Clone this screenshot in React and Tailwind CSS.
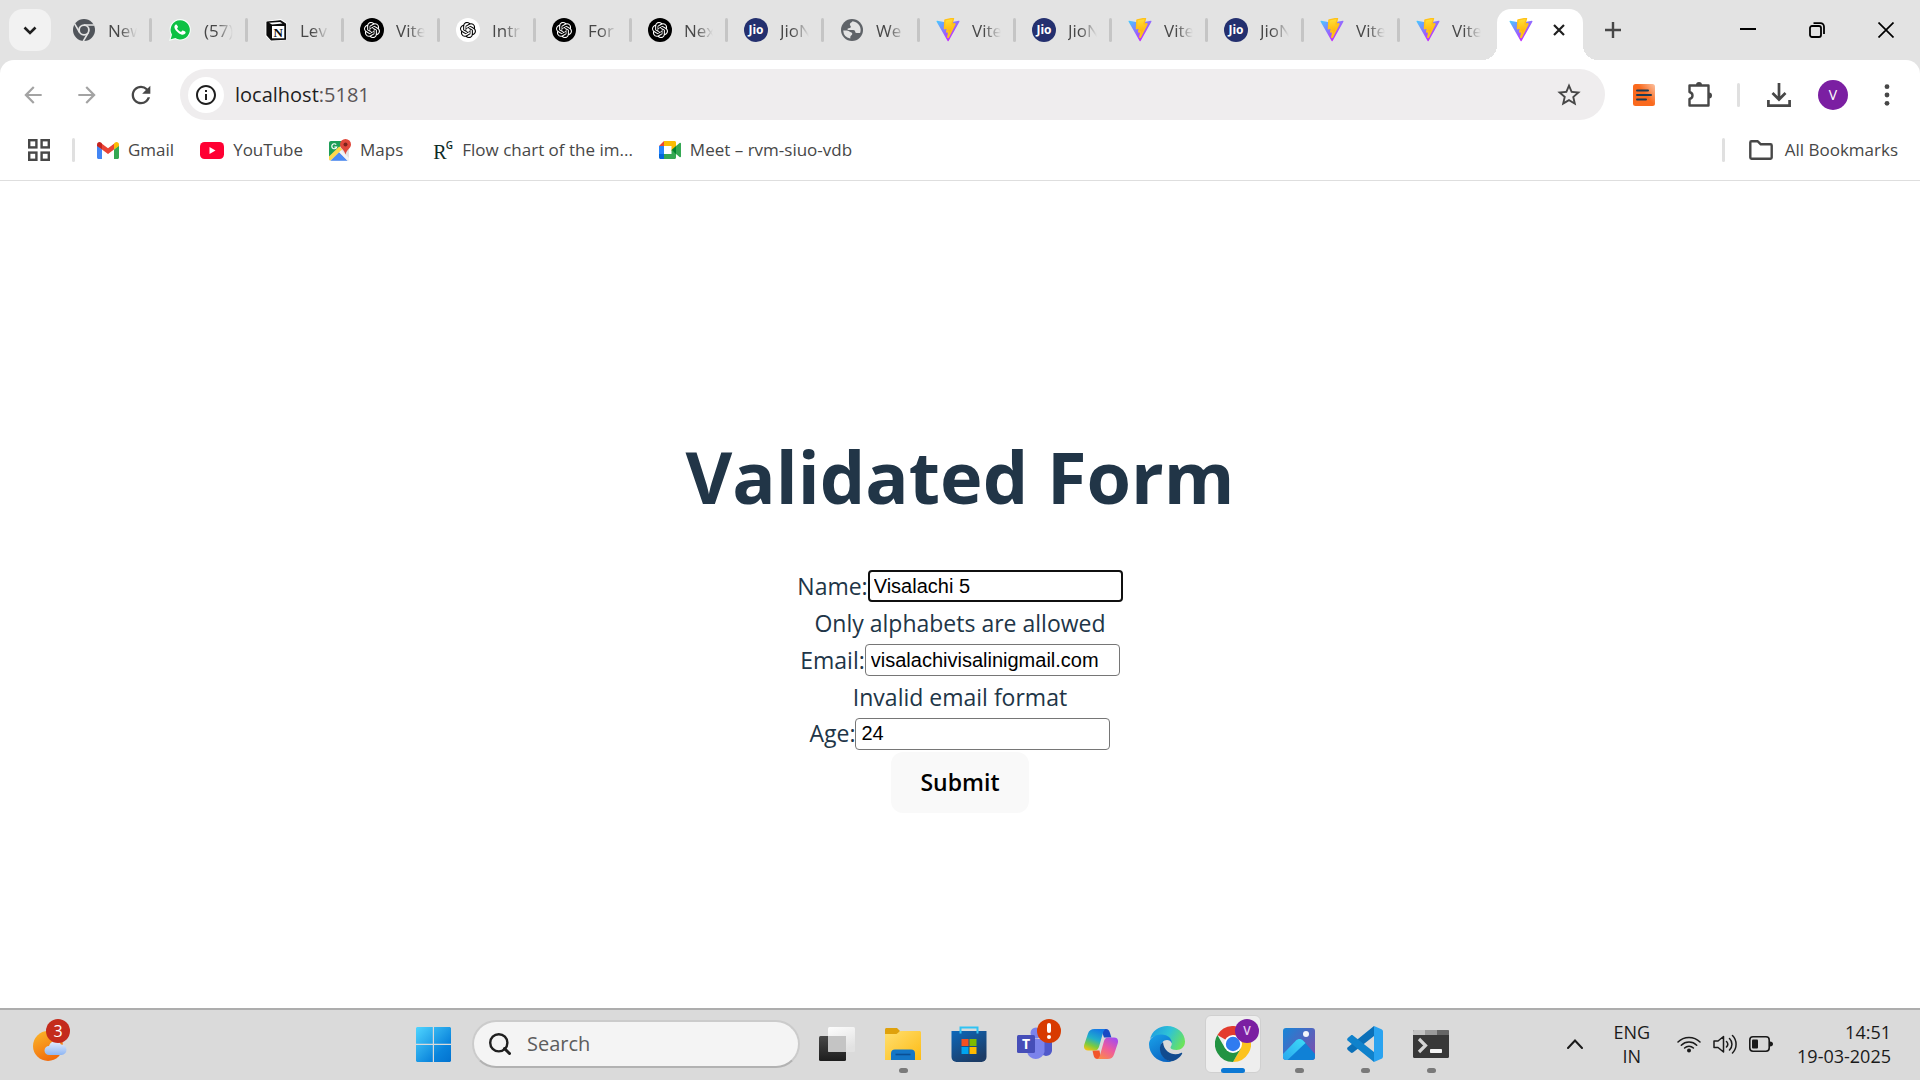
import React, { useState } from "react";
import { SiOpenai } from "react-icons/si";
import {
  MdArrowBack,
  MdArrowForward,
  MdRefresh,
  MdStarOutline,
  MdInfoOutline,
} from "react-icons/md";

function ViteIcon() {
  return (
    <svg viewBox="0 0 410 404" className="size-6 shrink-0" aria-hidden="true">
      <defs>
        <linearGradient id="viteShell" x1="6" y1="33" x2="235" y2="344" gradientUnits="userSpaceOnUse">
          <stop stopColor="#41D1FF" />
          <stop offset="1" stopColor="#BD34FE" />
        </linearGradient>
        <linearGradient id="viteBolt" x1="194.65" y1="8.82" x2="236.08" y2="292.99" gradientUnits="userSpaceOnUse">
          <stop stopColor="#FFEA83" />
          <stop offset=".083" stopColor="#FFDD35" />
          <stop offset="1" stopColor="#FFA800" />
        </linearGradient>
      </defs>
      <path
        fill="url(#viteShell)"
        d="M399.641 59.5246L215.643 388.545C211.844 395.338 202.084 395.378 198.228 388.618L10.5817 59.5563C6.38087 52.1896 12.6802 43.2665 21.0281 44.7586L205.223 77.6824C206.398 77.8924 207.601 77.8904 208.776 77.6763L389.119 44.8058C397.439 43.2894 403.768 52.1434 399.641 59.5246Z"
      />
      <path
        fill="url(#viteBolt)"
        stroke="#ffc21a"
        strokeWidth="24"
        d="M292.965 1.5744L156.801 28.2552C154.563 28.6937 152.906 30.5903 152.771 32.8664L144.395 174.33C144.198 177.662 147.258 180.248 150.51 179.498L188.42 170.749C191.967 169.931 195.172 173.055 194.443 176.622L183.18 231.775C182.422 235.487 185.907 238.661 189.532 237.56L212.947 230.446C216.577 229.344 220.065 232.527 219.297 236.242L201.398 322.875C200.278 328.294 207.486 331.249 210.492 326.603L212.5 323.5L323.454 102.072C325.312 98.3645 322.108 94.137 318.036 94.9228L279.014 102.454C275.347 103.161 272.227 99.746 273.262 96.1583L298.731 7.86689C299.767 4.27314 296.636 0.855181 292.965 1.5744Z"
      />
    </svg>
  );
}

function OpenAiDark() {
  return (
    <span className="flex size-6 shrink-0 items-center justify-center rounded-full bg-black">
      <SiOpenai className="size-4 text-white" />
    </span>
  );
}

function OpenAiLight() {
  return (
    <span className="flex size-6 shrink-0 items-center justify-center rounded-full bg-white">
      <SiOpenai className="size-4 text-black" />
    </span>
  );
}

function JioIcon() {
  return (
    <span className="flex size-6 shrink-0 items-center justify-center rounded-full bg-[#24306f] text-xs leading-none font-bold text-white">
      Jio
    </span>
  );
}

function WhatsAppIcon() {
  return (
    <svg viewBox="0 0 24 24" className="size-6 shrink-0" aria-hidden="true">
      <path fill="#f5fff8" d="M12.2 1a10.6 10.6 0 0 0-9.300 15.800L1 23l6.400-1.700A10.700 10.700 0 1 0 12.200 1z" />
      <path fill="#0dc143" d="M12.2 2.200a9.600 9.600 0 0 0-8.200 14.500L2.700 21.300l4.700-1.200A9.600 9.600 0 1 0 12.200 2.200z" />
      <path
        fill="#fff"
        d="M8.700 6.800c-.3-.6-.9-.5-1.300-.1-.5.5-1.100 1.200-1 2.500.1 1.300 1 2.700 2.500 4.300 1.800 1.900 3.500 2.900 5 3.200 1.500.3 2.700-.3 3.300-1.100.4-.6.5-1.400.3-1.700-.2-.3-2.200-1.300-2.700-1.400-.4-.1-.6.2-1.300 1.100-.3.4-.6.300-1 .1-1.200-.5-2.600-1.700-3.300-3-.2-.4 0-.6.3-.900.6-.7.6-.900.4-1.400z"
      />
    </svg>
  );
}

function NotionIcon() {
  return (
    <svg viewBox="0 0 24 24" className="size-6 shrink-0" aria-hidden="true">
      <path
        d="M3 4.500 16.500 2.500 21.500 6v14.500L8 22 3 17.500z"
        fill="#fff"
        stroke="#fff"
        strokeWidth="3"
        strokeLinejoin="round"
      />
      <path d="M3 4 16.500 2.800 21.500 6v15.200L7.500 22 3 17z" fill="#0b0b0b" stroke="#0b0b0b" strokeWidth="1.200" strokeLinejoin="round" />
      <path d="M5 4.800 16 4l2.500 1.600-10.500.8z" fill="#fff" />
      <path d="M8 8h12.300v12.300H8z" fill="#fff" />
      <text x="14.200" y="18.800" textAnchor="middle" fontSize="13" fontWeight="700" fontFamily="Liberation Serif, serif" fill="#0b0b0b">
        N
      </text>
    </svg>
  );
}

function ChromeGreyIcon() {
  return (
    <svg viewBox="0 0 24 24" className="size-6 shrink-0" aria-hidden="true">
      <circle cx="12" cy="12" r="11" fill="#50545a" />
      <path d="M12 7h10M16.300 14.500 11.300 23.200M7.700 14.500 2.700 5.800" stroke="#e3e3e3" strokeWidth="1.600" />
      <circle cx="12" cy="12" r="5.800" fill="#e3e3e3" />
      <circle cx="12" cy="12" r="4" fill="#50545a" />
    </svg>
  );
}

function GlobeIcon() {
  return (
    <svg viewBox="0 0 24 24" className="size-6 shrink-0" aria-hidden="true">
      <circle cx="12" cy="12" r="11" fill="#5f6368" />
      <path
        d="M12.500 3.200c-.6 1.300-2 1.300-2.500 2.600-.5 1.500 1 2 .8 3.200-.2 1.300-1.800 1-2.800 1.400-.9.400-.6 1.600.3 1.600h5c1.200 0 1.800.8 1.900 1.800.1 1.300 1.300 1.200 2.500 1.200h2.400A8.800 8.800 0 0 0 12.500 3.200z"
        fill="#e3e3e3"
      />
      <path d="M3.200 12.500h3.600c1.600 0 2.200 1 3.500 1.500 1.500.5 2.200 1 1.900 2.300-.3 1.200-1.900 1.400-1.900 2.700v1.600a8.800 8.800 0 0 1-7.100-8.100z" fill="#e3e3e3" />
    </svg>
  );
}

const iconFor = {
  chrome: ChromeGreyIcon,
  whatsapp: WhatsAppIcon,
  notion: NotionIcon,
  openai: OpenAiDark,
  openaiLight: OpenAiLight,
  jio: JioIcon,
  globe: GlobeIcon,
  vite: ViteIcon,
};

const tabs = [
  ["chrome", "New"],
  ["whatsapp", "(57)"],
  ["notion", "Lev"],
  ["openai", "Vite"],
  ["openaiLight", "Intr"],
  ["openai", "For"],
  ["openai", "Nex"],
  ["jio", "JioN"],
  ["globe", "We"],
  ["vite", "Vite"],
  ["jio", "JioN"],
  ["vite", "Vite"],
  ["jio", "JioN"],
  ["vite", "Vite"],
  ["vite", "Vite"],
];

function TabStrip() {
  return (
    <div className="flex h-[60px] items-stretch bg-[#e3e3e3]">
      <button
        aria-label="Search tabs"
        className="my-[9px] mr-[5px] ml-[9px] flex w-[42px] shrink-0 items-center justify-center rounded-[14px] bg-[#f2f2f2]"
      >
        <svg viewBox="0 0 14 9" className="h-[9px] w-[14px]" fill="none" stroke="#1f1f1f" strokeWidth="2.600" aria-hidden="true">
          <path d="M1.500 1.500 7 7l5.500-5.500" />
        </svg>
      </button>
      <div role="tablist" className="flex min-w-0">
        {tabs.map(([icon, title], i) => {
          const Icon = iconFor[icon];
          return (
            <button
              key={i}
              role="tab"
              aria-selected="false"
              className="flex w-24 min-w-0 items-center pl-4 text-left"
            >
              <Icon />
              <span className="ml-3 pt-0.5 text-[17px] leading-6 whitespace-nowrap text-[#474747] [mask-image:linear-gradient(to_right,black_12px,transparent_29px)]">
                {title}
              </span>
              {i < tabs.length - 1 && <span className="ml-auto h-6 w-[3px] shrink-0 rounded-full bg-[#c5c5c5]" />}
            </button>
          );
        })}
        <div className="relative mt-[9px] ml-px flex w-[86px] shrink-0 items-center rounded-t-[14px] bg-white pb-[9px] pl-3">
          <span className="absolute bottom-0 -left-[15px] size-[15px] bg-[radial-gradient(circle_at_0_0,transparent_15px,white_15px)]" />
          <span className="absolute -right-[15px] bottom-0 size-[15px] bg-[radial-gradient(circle_at_100%_0,transparent_15px,white_15px)]" />
          <button role="tab" aria-selected="true" aria-label="Vite + React">
            <ViteIcon />
          </button>
          <button aria-label="Close tab" className="ml-5">
            <svg viewBox="0 0 12 12" className="size-3" stroke="#1f1f1f" strokeWidth="2.200" aria-hidden="true">
              <path d="m1 1 10 10M11 1 1 11" />
            </svg>
          </button>
        </div>
      </div>
      <button aria-label="New tab" className="ml-[22px] flex w-4 items-center">
        <svg viewBox="0 0 16 16" className="size-4" stroke="#474747" strokeWidth="2.400" aria-hidden="true">
          <path d="M8 0v16M0 8h16" />
        </svg>
      </button>
      <div className="ml-auto flex">
        <button aria-label="Minimize" className="flex w-[69px] items-center justify-center">
          <svg viewBox="0 0 16 16" className="size-4" stroke="#000" strokeWidth="2" aria-hidden="true">
            <path d="M0 7h16" />
          </svg>
        </button>
        <button aria-label="Restore" className="flex w-[69px] items-center justify-center">
          <svg viewBox="0 0 16 16" className="size-4" fill="none" stroke="#000" strokeWidth="1.800" aria-hidden="true">
            <rect x="1" y="4" width="11" height="11" rx="2" />
            <path d="M4.500 1.200h7a3.500 3.500 0 0 1 3.500 3.500V12" />
          </svg>
        </button>
        <button aria-label="Close window" className="flex w-[69px] items-center justify-center">
          <svg viewBox="0 0 16 16" className="size-4" stroke="#000" strokeWidth="1.700" aria-hidden="true">
            <path d="m.5.500 15 15M15.500.500l-15 15" />
          </svg>
        </button>
      </div>
    </div>
  );
}

function ToolButton({ label, children }) {
  return (
    <button aria-label={label} className="flex h-[50px] w-[54px] shrink-0 items-center justify-center text-[#474747]">
      {children}
    </button>
  );
}

function Toolbar() {
  return (
    <div className="flex items-center rounded-t-[14px] bg-white px-[6px] pt-[9px]">
      <ToolButton label="Back">
        <MdArrowBack className="size-[26px] text-[#a3a3a3]" />
      </ToolButton>
      <ToolButton label="Forward">
        <MdArrowForward className="size-[26px] text-[#a3a3a3]" />
      </ToolButton>
      <ToolButton label="Reload">
        <MdRefresh className="size-7" />
      </ToolButton>
      <div className="ml-3 flex h-[51px] min-w-0 flex-1 items-center rounded-full bg-[#efedee] pr-[22px] pl-2">
        <button
          aria-label="View site information"
          className="flex size-9 shrink-0 items-center justify-center rounded-full bg-white text-[#1f1f1f]"
        >
          <MdInfoOutline className="size-6" />
        </button>
        <p className="ml-[11px] text-xl leading-7 text-[#5b5557]">
          <span className="text-[#1f1f1f]">localhost</span>:5181
        </p>
        <button aria-label="Bookmark this tab" className="ml-auto text-[#474747]">
          <MdStarOutline className="size-7" />
        </button>
      </div>
      <div className="ml-3 flex items-center">
        <ToolButton label="Extension">
          <svg viewBox="0 0 22 22" className="size-[22px]" aria-hidden="true">
            <defs>
              <linearGradient id="noteFill" x1="1" y1="0" x2=".5" y2=".4">
                <stop stopColor="#fbc3a3" />
                <stop offset="1" stopColor="#fa6a1e" />
              </linearGradient>
            </defs>
            <rect width="22" height="22" rx="2.500" fill="url(#noteFill)" />
            <path d="M4 6.500h11M4 11h14M4 15.500h9" stroke="#1d3b53" strokeWidth="2" strokeLinecap="round" />
          </svg>
        </ToolButton>
        <ToolButton label="Extensions">
          <svg viewBox="0 0 26 26" className="mb-0.5 ml-1 size-[26px]" fill="none" stroke="#474747" strokeWidth="2.400" strokeLinejoin="round" aria-hidden="true">
            <path d="M2.500 4.500h19v20h-19v-6.500c2.200-.6 3-1.800 3-3.500s-.8-2.900-3-3.500z" />
            <path d="M9 4a3 3 0 0 1 6 0zM22 11.500a3 3 0 0 1 0 6z" fill="#474747" stroke="none" />
          </svg>
        </ToolButton>
        <span className="mx-3 h-6 w-[3px] shrink-0 rounded-full bg-[#e0e0e0]" />
        <ToolButton label="Downloads">
          <svg viewBox="0 0 24 24" className="size-6" fill="none" stroke="#474747" strokeWidth="2.700" aria-hidden="true">
            <path d="M12 0v16M5.500 10 12 16.500 18.500 10M1.400 17v5.600h21.200V17" />
          </svg>
        </ToolButton>
        <ToolButton label="Profile">
          <span className="flex size-[30px] items-center justify-center rounded-full bg-[#7b1fa2] text-sm text-white">V</span>
        </ToolButton>
        <ToolButton label="Menu">
          <svg viewBox="0 0 6 22" className="h-[22px] w-[6px]" fill="#474747" aria-hidden="true">
            <circle cx="3" cy="2.700" r="2.400" />
            <circle cx="3" cy="11" r="2.400" />
            <circle cx="3" cy="19.300" r="2.400" />
          </svg>
        </ToolButton>
      </div>
    </div>
  );
}

function GmailIcon() {
  return (
    <svg viewBox="0 0 22 17" className="h-[17px] w-[22px]" aria-hidden="true">
      <path fill="#4285f4" d="M0 3v12.500C0 16.300.7 17 1.500 17H5V7.500z" />
      <path fill="#34a853" d="M22 3v12.500c0 .8-.7 1.500-1.500 1.500H17V7.500z" />
      <path fill="#ea4335" d="m5 1.800 6 4.500 6-4.500v5.800L11 12 5 7.600z" />
      <path fill="#c5221f" d="M0 2.600C0 .5 2.300-.7 4 .6l1 .8v6.200L0 3.900z" />
      <path fill="#fbbc04" d="M22 2.600c0-2.100-2.300-3.300-4-2l-1 .8v6.200l5-3.700z" />
    </svg>
  );
}

function YouTubeIcon() {
  return (
    <svg viewBox="0 0 24 17" className="h-[17px] w-6" aria-hidden="true">
      <rect width="24" height="17" rx="4.500" fill="#ff0033" />
      <path d="M9.500 5v7l6-3.500z" fill="#fff" />
    </svg>
  );
}

function MapsIcon() {
  return (
    <svg viewBox="0 0 22 22" className="size-[22px]" aria-hidden="true">
      <rect y="2" width="20" height="20" rx="2" fill="#e4e4e4" />
      <path d="M0 14V4c0-1.100.9-2 2-2h12v3L0 18z" fill="#1e9e58" />
      <path d="m0 17.500 10.200-10 3 3L1.500 21.500C.6 21.300 0 20.800 0 20z" fill="#ffd94a" />
      <path d="m1.500 21.800 8.700-8.600 8.600 8.600z" fill="#4a8af4" />
      <path d="m10.200 13.200 2-2L20 19v1c0 1-.6 1.800-1.500 1.800z" fill="#f4f4f4" />
      <path d="M16.500 0A5.500 5.500 0 0 1 22 5.500c0 4-4.200 4.800-5.500 10-1.300-5.200-5.500-6-5.500-10A5.500 5.500 0 0 1 16.500 0z" fill="#e0483b" />
      <circle cx="16.500" cy="5.500" r="2" fill="#7d231c" />
      <path d="M7.200 5.600A2.500 2.500 0 1 0 7.700 8H5.300" fill="none" stroke="#fff" strokeWidth="1.200" />
    </svg>
  );
}

function ResearchGateIcon() {
  return (
    <span className="flex h-5 w-6 items-end pl-1 text-[#0d2b26]">
      <span className="font-['Liberation_Serif',serif] text-xl leading-4">R</span>
      <span className="-ml-px self-start text-[10px] leading-[10px] font-semibold">G</span>
    </span>
  );
}

function MeetIcon() {
  return (
    <svg viewBox="0 0 22 18" className="h-[18px] w-[22px]" aria-hidden="true">
      <path fill="#ea4335" d="M5 0v5H0z" />
      <path fill="#fbbc04" d="M5 0h10.500c.9 0 1.500.6 1.500 1.500V7l-4.500 3V5H5z" />
      <path fill="#2684fc" d="M0 5h5v8H0z" />
      <path fill="#0066da" d="M0 13h5v5H1.500C.7 18 0 17.300 0 16.500z" />
      <path fill="#34a853" d="M5 13h7.500V9L17 12v4.500c0 .9-.6 1.500-1.500 1.500H5z" />
      <path fill="#00832d" d="m12.500 9 4.500-4v8z" />
      <path fill="#34a853" d="m17 5 3.600-3c.6-.5 1.400-.1 1.400.6v12.800c0 .7-.8 1.100-1.400.6L17 13z" />
    </svg>
  );
}

function Bookmark({ icon, children }) {
  return (
    <a href="#" className="flex shrink-0 items-center gap-[9px]">
      {icon}
      {children}
    </a>
  );
}

function BookmarksBar() {
  return (
    <nav
      aria-label="Bookmarks"
      className="flex h-[61px] items-center border-b border-[#dedede] bg-white pr-[22px] pl-7 text-[17px] leading-6 text-[#474747]"
    >
      <button aria-label="Apps" className="shrink-0">
        <svg viewBox="0 0 22 22" className="size-[22px]" fill="none" stroke="#474747" strokeWidth="2.400" aria-hidden="true">
          <rect x="1.200" y="1.200" width="7.200" height="7.200" />
          <rect x="13.600" y="1.200" width="7.200" height="7.200" />
          <rect x="1.200" y="13.600" width="7.200" height="7.200" />
          <rect x="13.600" y="13.600" width="7.200" height="7.200" />
        </svg>
      </button>
      <span className="mx-[22px] h-6 w-[3px] rounded-full bg-[#e0e0e0]" />
      <div className="flex min-w-0 flex-1 items-center gap-[26px]">
        <Bookmark icon={<GmailIcon />}>Gmail</Bookmark>
        <Bookmark icon={<YouTubeIcon />}>YouTube</Bookmark>
        <Bookmark icon={<MapsIcon />}>Maps</Bookmark>
        <Bookmark icon={<ResearchGateIcon />}>Flow chart of the im...</Bookmark>
        <Bookmark icon={<MeetIcon />}>Meet – rvm-siuo-vdb</Bookmark>
      </div>
      <span className="mr-6 h-6 w-[3px] shrink-0 rounded-full bg-[#e0e0e0]" />
      <button className="flex shrink-0 items-center gap-3">
        <svg viewBox="0 0 24 20" className="h-5 w-6" fill="none" stroke="#474747" strokeWidth="2.400" strokeLinejoin="round" aria-hidden="true">
          <path d="M1.300 2.500c0-.7.500-1.200 1.200-1.200h6.300l3 3h9.700c.7 0 1.200.5 1.200 1.200v12c0 .7-.5 1.200-1.200 1.200h-19c-.7 0-1.200-.5-1.200-1.200z" />
        </svg>
        All Bookmarks
      </button>
    </nav>
  );
}

const inputStyle =
  "h-8 w-[255px] rounded-[4px] border border-[#767676] bg-white px-[5px] font-['Liberation_Sans',Arial,sans-serif] text-xl leading-6 text-black outline-none";

function ValidatedForm() {
  const [name, setName] = useState("Visalachi 5");
  const [email, setEmail] = useState("visalachivisalinigmail.com");
  const [age, setAge] = useState("24");
  return (
    <form
      className="flex flex-col items-center text-[23px] leading-[37px] text-[#213547]"
      onSubmit={(e) => e.preventDefault()}
    >
      <h1 className="mt-[59px] mb-[52px] text-7xl leading-20 font-bold">Validated Form</h1>
      <div className="flex h-[37px] items-center">
        <label htmlFor="name">Name:</label>
        <input
          id="name"
          value={name}
          onChange={(e) => setName(e.target.value)}
          className="h-8 w-[255px] rounded-[4px] border-2 border-[#101010] bg-white px-1 font-['Liberation_Sans',Arial,sans-serif] text-xl leading-6 text-black outline-none"
        />
      </div>
      <p>Only alphabets are allowed</p>
      <div className="flex h-[37px] items-center">
        <label htmlFor="email">Email:</label>
        <input id="email" value={email} onChange={(e) => setEmail(e.target.value)} className={inputStyle} />
      </div>
      <p>Invalid email format</p>
      <div className="flex h-9 items-center">
        <label htmlFor="age">Age:</label>
        <input id="age" value={age} onChange={(e) => setAge(e.target.value)} className={inputStyle} />
      </div>
      <button type="submit" className="rounded-xl bg-[#f9f9f9] px-[29px] py-3 font-semibold text-black">
        Submit
      </button>
    </form>
  );
}

function WeatherIcon() {
  return (
    <svg viewBox="0 0 36 38" className="h-[38px] w-9" aria-hidden="true">
      <defs>
        <linearGradient id="sun" x1="0" y1="0" x2=".5" y2="1">
          <stop stopColor="#fbb92b" />
          <stop offset="1" stopColor="#f26c0d" />
        </linearGradient>
        <linearGradient id="cloud" x1="0" y1="0" x2="0" y2="1">
          <stop stopColor="#e6effd" />
          <stop offset="1" stopColor="#8fb6f3" />
        </linearGradient>
      </defs>
      <circle cx="15" cy="20" r="15" fill="url(#sun)" />
      <path d="M16 29a4.500 4.500 0 0 1 0-9 6.500 6.500 0 0 1 12-1.500 5 5 0 0 1 .5 10.500z" fill="url(#cloud)" />
    </svg>
  );
}

function WindowsIcon() {
  return (
    <svg viewBox="0 0 35 35" className="size-[35px]" aria-hidden="true">
      <defs>
        <linearGradient id="win" x1="0" y1="0" x2="35" y2="35" gradientUnits="userSpaceOnUse">
          <stop stopColor="#4fd5ff" />
          <stop offset=".7" stopColor="#0a84dc" />
          <stop offset="1" stopColor="#0272cf" />
        </linearGradient>
      </defs>
      <path d="M1 0h15.800v16.800H0V1zM18 0h16l1 1v15.800H18zM0 18h16.800v17H1l-1-1zM18 18h17v16l-1 1H18z" fill="url(#win)" />
    </svg>
  );
}

function TaskViewIcon() {
  return (
    <svg viewBox="0 0 36 36" className="size-9" aria-hidden="true">
      <defs>
        <linearGradient id="tvBack" x1="0" y1="0" x2="0" y2="1">
          <stop stopColor="#484848" />
          <stop offset="1" stopColor="#1d1d1d" />
        </linearGradient>
        <linearGradient id="tvFront" x1="0" y1="0" x2=".4" y2="1">
          <stop stopColor="#fdfdfd" />
          <stop offset="1" stopColor="#e2e2e2" />
        </linearGradient>
      </defs>
      <rect y="10" width="27" height="25" rx="1.500" fill="url(#tvBack)" />
      <rect x="9" y="1" width="27" height="25" rx="1.500" fill="url(#tvFront)" />
      <path d="M9 10h18v16H10.500A1.500 1.500 0 0 1 9 24.500z" fill="#c4c4c4" />
    </svg>
  );
}

function FolderIcon() {
  return (
    <svg viewBox="0 0 36 36" className="size-9" aria-hidden="true">
      <defs>
        <linearGradient id="fold" x1="0" y1="0" x2="1" y2="1">
          <stop stopColor="#ffdf70" />
          <stop offset="1" stopColor="#fdbb14" />
        </linearGradient>
      </defs>
      <path d="M0 3.500C0 2.700.7 2 1.500 2H12l3 3-3 4H0z" fill="#dfa10c" />
      <path d="M0 8h11.500l4-3h19c.8 0 1.500.7 1.500 1.500V34H0z" fill="url(#fold)" />
      <path d="M6 34v-6.500a4 4 0 0 1 4-4h16a4 4 0 0 1 4 4V34z" fill="#1476c6" />
      <path d="M10.500 28.500h15" stroke="#0a4f93" strokeWidth="1.600" />
    </svg>
  );
}

function StoreIcon() {
  return (
    <svg viewBox="0 0 36 36" className="size-9" aria-hidden="true">
      <defs>
        <linearGradient id="store" x1="0" y1="0" x2=".6" y2="1">
          <stop stopColor="#0d68bb" />
          <stop offset="1" stopColor="#1c3c66" />
        </linearGradient>
      </defs>
      <path d="M.5 5h35v26a5 5 0 0 1-5 5h-25a5 5 0 0 1-5-5z" fill="url(#store)" />
      <path d="M9.500 7.500v-6h17v6" fill="none" stroke="#31c3f3" strokeWidth="2" />
      <path d="M10.500 13h7v7h-7z" fill="#f25022" />
      <path d="M18.500 13h7v7h-7z" fill="#7fba00" />
      <path d="M10.500 21h7v7h-7z" fill="#00a4ef" />
      <path d="M18.500 21h7v7h-7z" fill="#ffb900" />
    </svg>
  );
}

function TeamsIcon() {
  return (
    <svg viewBox="0 0 36 36" className="size-9" aria-hidden="true">
      <path d="M24 13h11v12a6 6 0 0 1-11 2z" fill="#5059c9" />
      <circle cx="19" cy="7" r="5.500" fill="#7b83eb" />
      <path d="M10 13h17.500v13a9 9 0 0 1-17.500 0z" fill="#7b83eb" />
      <rect y="9" width="18" height="18" rx="1.500" fill="#464eb8" />
      <text x="9" y="23" textAnchor="middle" fontSize="14" fontWeight="700" fontFamily="Open Sans, sans-serif" fill="#fff">
        T
      </text>
    </svg>
  );
}

function CopilotIcon() {
  return (
    <svg viewBox="0 0 34 32" className="h-8 w-[34px]" aria-hidden="true">
      <defs>
        <linearGradient id="cpA" x1=".6" y1="0" x2=".2" y2="1">
          <stop stopColor="#1479e6" />
          <stop offset=".45" stopColor="#22b0c8" />
          <stop offset=".75" stopColor="#7ccb3e" />
          <stop offset="1" stopColor="#f2c313" />
        </linearGradient>
        <linearGradient id="cpB" x1=".8" y1="0" x2=".2" y2="1">
          <stop stopColor="#a34cf0" />
          <stop offset=".5" stopColor="#ee5b9d" />
          <stop offset="1" stopColor="#fb8a4b" />
        </linearGradient>
      </defs>
      <path d="M17 1h5c2.200 0 3.200 1.400 4 4l1.400 4.500H20z" fill="#1a49c4" />
      <path d="M8.500 22.500h7L17 31h-3.500c-2.300 0-3.300-1.600-4-4z" fill="#f2552b" />
      <path d="M10.500 1H22c-1.700.6-2.500 2-3.200 4.500l-3.600 12.800c-.8 2.800-2 4.200-4.700 4.200H4c-3.500 0-4.700-2.500-3.700-6L4 5.500C5 2.500 7 1 10.500 1z" fill="url(#cpA)" />
      <path d="M23.500 31H13c1.700-.6 2.500-2 3.200-4.500l3.600-12.800c.8-2.800 2-4.200 4.700-4.200H30c3.500 0 4.700 2.500 3.700 6L30 26.500c-1 3-3 4.500-6.500 4.500z" fill="url(#cpB)" />
    </svg>
  );
}

function EdgeIcon() {
  return (
    <svg viewBox="0 0 36 36" className="size-9" aria-hidden="true">
      <defs>
        <linearGradient id="edTop" x1="0" y1=".2" x2="1" y2=".6">
          <stop stopColor="#1f9ce0" />
          <stop offset=".5" stopColor="#2fc3d6" />
          <stop offset="1" stopColor="#6be35c" />
        </linearGradient>
        <linearGradient id="edLeft" x1="0" y1="0" x2=".5" y2="1">
          <stop stopColor="#1aa3ea" />
          <stop offset="1" stopColor="#0b68c4" />
        </linearGradient>
      </defs>
      <path d="M1 13C3 5 10 0 18 0c10 0 18 7 18 15.500C36 21 32 24 27.500 24c-4 0-6-1.200-6-2.500 0-1 1.300-1.600 1.300-4 0-4-4-8-10-8C7 9.500 3 11 1 13z" fill="url(#edTop)" />
      <path d="M0 18c0-5 5-9.500 12-9.500 7.500 0 11 4.500 11 9-1-2.500-3-3.500-5-3.500-3.500 0-6.500 3-6.500 8 0 7 5 12.500 11 13.200C21 36 19.500 36 18 36 8 36 0 28 0 18z" fill="url(#edLeft)" />
      <path d="M14 16c-2.500 1.500-3.500 4.500-3 8 1 7 6.500 11 11.500 11.300 5-.8 8.500-4 10.500-7.300.6-1-.2-1.500-1-1-7 3.500-17 0-18-11z" fill="#114b8f" />
    </svg>
  );
}

function ChromeIcon() {
  return (
    <svg viewBox="0 0 36 36" className="size-9" aria-hidden="true">
      <path d="M18 18 2.400 9A18 18 0 0 1 33.600 9z" fill="#e33b2e" />
      <path d="M33.600 9A18 18 0 0 1 18 36l7.800-13.500L18 9z" fill="#fcc31e" />
      <path d="M2.400 9A18 18 0 0 0 18 36l7.800-13.500H10.200z" fill="#229342" />
      <path d="M18 9h15.600L25.800 22.500z" fill="#fcc31e" />
      <circle cx="18" cy="18" r="9" fill="#fff" />
      <circle cx="18" cy="18" r="7.200" fill="#2f7bf0" />
    </svg>
  );
}

function PhotosIcon() {
  return (
    <svg viewBox="0 0 32 32" className="size-8" aria-hidden="true">
      <defs>
        <linearGradient id="phBg" x1="0" y1="0" x2="1" y2=".8">
          <stop stopColor="#1586d8" />
          <stop offset="1" stopColor="#7a4fae" />
        </linearGradient>
        <linearGradient id="phHill" x1="1" y1="0" x2="0" y2="1">
          <stop stopColor="#3ddcf8" />
          <stop offset="1" stopColor="#2aa7ee" />
        </linearGradient>
      </defs>
      <rect width="32" height="32" rx="3" fill="url(#phBg)" />
      <path d="M4 32 17 13c1-1.400 2.500-1.400 3.500 0L32 26v3a3 3 0 0 1-3 3z" fill="#1081d6" />
      <path d="M0 26 13 12.500c2-2 5-2 7 0l2.500 2.500L4.500 32H3a3 3 0 0 1-3-3z" fill="url(#phHill)" />
      <circle cx="23" cy="6" r="3" fill="#f4f6fb" />
    </svg>
  );
}

function VsCodeIcon() {
  return (
    <svg viewBox="0 0 36 36" className="size-9" aria-hidden="true">
      <path d="M27 0v10L6 26.500c-.7.600-1.600.6-2.200 0L.8 24c-.9-.8-.9-2 0-2.700z" fill="#0b70b8" />
      <path d="M27 36V26L6 9.500c-.7-.6-1.600-.6-2.200 0L.8 12c-.9.8-.9 2 0 2.700z" fill="#0f82cc" />
      <path d="M27 0l7.500 3.300c.9.4 1.500 1.300 1.500 2.300v24.800c0 1-.6 1.900-1.500 2.300L27 36z" fill="#2aa3f0" />
    </svg>
  );
}

function TerminalIcon() {
  return (
    <svg viewBox="0 0 36 28" className="h-7 w-9" aria-hidden="true">
      <rect width="36" height="28" rx="1.500" fill="#383838" />
      <path d="M1.500 0H12v5H0V1.500C0 .7.700 0 1.500 0z" fill="#c2c2c2" />
      <path d="M12 0h12v5H12z" fill="#9a9a9a" />
      <path d="M24 0h10.500c.8 0 1.500.7 1.500 1.500V5H24z" fill="#666" />
      <path d="m6 9 6.500 6.500L6 22" fill="none" stroke="#d5d5d5" strokeWidth="3.200" />
      <rect x="17" y="19" width="12" height="4" rx=".8" fill="#f4f4f4" />
    </svg>
  );
}

function TaskButton({ label, running, active, badge, children }) {
  return (
    <button aria-label={label} className="relative flex w-[66px] shrink-0 items-center justify-center">
      {active && <span className="absolute inset-x-[5px] top-[5px] bottom-[7px] rounded-md border border-[#d0d0d0] bg-[#eeeeee]" />}
      <span className="relative flex pb-[2px]">{children}</span>
      {badge}
      {running && !active && <span className="absolute bottom-[7px] h-[5px] w-[9px] rounded-full bg-[#7a7a7a]" />}
      {active && <span className="absolute bottom-[7px] h-[5px] w-6 rounded-full bg-[#0b78d4]" />}
    </button>
  );
}

function Taskbar() {
  return (
    <footer className="flex h-[72px] items-stretch border-t-2 border-[#adadad] bg-[#dadada]">
      <div className="flex w-[400px] min-w-0 items-center pl-[33px]">
        <button aria-label="Weather" className="relative">
          <WeatherIcon />
          <span className="absolute -top-[7px] left-[13px] flex size-6 items-center justify-center rounded-full bg-[#c42b1c] text-base leading-none text-white">
            3
          </span>
        </button>
      </div>
      <TaskButton label="Start">
        <WindowsIcon />
      </TaskButton>
      <label className="mt-[10px] mr-1 mb-3 ml-[6px] flex w-[328px] shrink items-center rounded-full border-2 border-[#cbcbcb] border-b-[#b2b2b2] bg-[#f4f4f4] pl-[15px]">
        <svg viewBox="0 0 22 22" className="size-[22px] shrink-0" fill="none" stroke="#1f1f1f" strokeWidth="2.400" strokeLinecap="round" aria-hidden="true">
          <circle cx="9.800" cy="9.800" r="8.600" />
          <path d="m15.500 15.500 5 5" strokeWidth="3" />
        </svg>
        <input
          aria-label="Search"
          placeholder="Search"
          className="ml-4 w-full min-w-0 bg-transparent text-xl leading-7 text-black outline-none placeholder:text-[#5d5d5d]"
        />
      </label>
      <TaskButton label="Task view">
        <TaskViewIcon />
      </TaskButton>
      <TaskButton label="File Explorer" running>
        <FolderIcon />
      </TaskButton>
      <TaskButton label="Microsoft Store">
        <StoreIcon />
      </TaskButton>
      <TaskButton
        label="Teams"
        badge={
          <span className="absolute top-[9px] right-[7px] flex size-6 items-center justify-center rounded-full bg-[#d83b01]">
            <svg viewBox="0 0 4 16" className="h-4 w-1" fill="#fff" aria-hidden="true">
              <rect width="4" height="10" rx="2" />
              <circle cx="2" cy="14" r="2" />
            </svg>
          </span>
        }
      >
        <TeamsIcon />
      </TaskButton>
      <TaskButton label="Copilot">
        <CopilotIcon />
      </TaskButton>
      <TaskButton label="Edge">
        <EdgeIcon />
      </TaskButton>
      <TaskButton
        label="Chrome"
        active
        badge={
          <span className="absolute top-[9px] right-[7px] flex size-6 items-center justify-center rounded-full bg-[#7b1fa2] text-xs font-semibold text-[#e6cdf0]">
            V
          </span>
        }
      >
        <ChromeIcon />
      </TaskButton>
      <TaskButton label="Photos" running>
        <PhotosIcon />
      </TaskButton>
      <TaskButton label="Visual Studio Code" running>
        <VsCodeIcon />
      </TaskButton>
      <TaskButton label="Terminal" running>
        <TerminalIcon />
      </TaskButton>
      <div className="ml-auto flex shrink-0 items-center pr-[29px] pb-0.5 text-lg leading-6 text-[#1a1a1a]">
        <button aria-label="Show hidden icons">
          <svg viewBox="0 0 16 10" className="h-[10px] w-4" fill="none" stroke="#1a1a1a" strokeWidth="2" strokeLinecap="round" aria-hidden="true">
            <path d="m1 9 7-7.500L15 9" />
          </svg>
        </button>
        <button className="ml-[30px] text-center">
          ENG
          <br />
          IN
        </button>
        <button aria-label="Network, volume and battery" className="ml-[27px] flex items-center gap-3">
          <svg viewBox="0 0 24 18" className="h-[18px] w-6" fill="none" stroke="#1a1a1a" strokeWidth="1.500" strokeLinecap="round" aria-hidden="true">
            <path d="M1 7a15.500 15.500 0 0 1 22 0M4.300 10.300a10.900 10.900 0 0 1 15.400 0M7.600 13a6.200 6.200 0 0 1 8.800 0" />
            <circle cx="12" cy="15.600" r="2" fill="#1a1a1a" stroke="none" />
          </svg>
          <svg viewBox="0 0 24 20" className="h-5 w-6" fill="none" stroke="#1a1a1a" strokeWidth="1.500" strokeLinecap="round" strokeLinejoin="round" aria-hidden="true">
            <path d="M1 7v6.500h4l5.500 4.500V2.500L5 7z" />
            <path d="M13.500 7.500a4 4 0 0 1 0 5.500M16.500 4.500a8 8 0 0 1 0 11.500M19.500 1.500a12.500 12.500 0 0 1 0 17.500" />
          </svg>
          <svg viewBox="0 0 24 16" className="h-4 w-6" aria-hidden="true">
            <rect x=".8" y=".8" width="19.400" height="14.400" rx="3.200" fill="none" stroke="#1a1a1a" strokeWidth="1.600" />
            <rect x="3" y="3.500" width="6" height="9" rx="1" fill="#1a1a1a" />
            <path d="M21 5.500c2 0 3 1 3 2.500s-1 2.500-3 2.500z" fill="#1a1a1a" />
          </svg>
        </button>
        <button className="ml-6 text-right">
          14:51
          <br />
          19-03-2025
        </button>
      </div>
    </footer>
  );
}

export default function App() {
  return (
    <div className="flex min-h-screen flex-col bg-white font-['Open_Sans','Noto_Sans',sans-serif]">
      <header className="bg-[#e3e3e3]">
        <TabStrip />
        <Toolbar />
        <BookmarksBar />
      </header>
      <main className="flex flex-1 items-center justify-center">
        <ValidatedForm />
      </main>
      <Taskbar />
    </div>
  );
}
